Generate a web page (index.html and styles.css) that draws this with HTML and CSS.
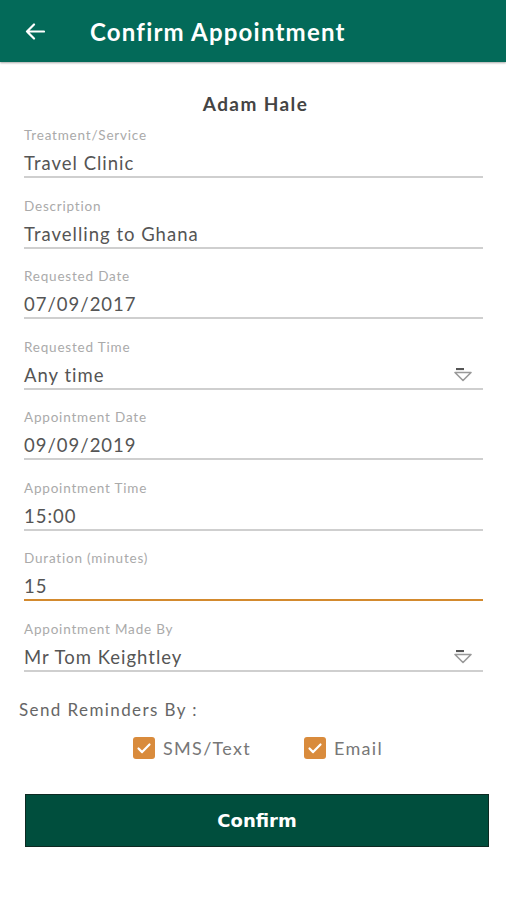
FILE: index.html
```html
<!doctype html>
<html>
<head lang="en">
	<meta charset="UTF-8">
	<meta name="viewport" content="width=device-width, initial-scale=1">
	<title>Confirm Appointment</title>
	<link rel="stylesheet" href="styles.css">
</head>
<body>

<svg style="display:none" xmlns="http://www.w3.org/2000/svg">
	<symbol id="icon-drop" viewBox="0 0 20 14">
		<path d="M3 1h8" stroke="#555" stroke-width="2.2" fill="none"/>
		<path d="M2 4.5h16l-8 8z" stroke="#999" stroke-width="1.6" fill="none" stroke-linejoin="round"/>
	</symbol>
	<symbol id="icon-check" viewBox="0 0 22 22">
		<path d="M5.5 11.5l3.6 3.6 7.4-7.6" stroke="#fff" stroke-width="2.2" fill="none" stroke-linecap="round" stroke-linejoin="round"/>
	</symbol>
</svg>

<header class="ap-header">
	<svg class="ap-header__back" viewBox="0 0 20 17">
		<path d="M19 8.5H2M9 1.5l-7 7 7 7" stroke="#fff" stroke-width="2.2" fill="none" stroke-linecap="round" stroke-linejoin="round"/>
	</svg>
	<h1 class="ap-header__title">Confirm Appointment</h1>
</header>

<div class="ap-content">
	<div class="ap-name">Adam Hale</div>

	<div class="ap-field">
		<div class="ap-field__label">Treatment/Service</div>
		<div class="ap-field__value">Travel Clinic</div>
	</div>
	<div class="ap-field">
		<div class="ap-field__label">Description</div>
		<div class="ap-field__value">Travelling to Ghana</div>
	</div>
	<div class="ap-field">
		<div class="ap-field__label">Requested Date</div>
		<div class="ap-field__value">07/09/2017</div>
	</div>
	<div class="ap-field">
		<div class="ap-field__label">Requested Time</div>
		<div class="ap-field__value">Any time
			<svg class="ap-field__drop"><use xlink:href="#icon-drop"></use></svg>
		</div>
	</div>
	<div class="ap-field">
		<div class="ap-field__label">Appointment Date</div>
		<div class="ap-field__value">09/09/2019</div>
	</div>
	<div class="ap-field">
		<div class="ap-field__label">Appointment Time</div>
		<div class="ap-field__value">15:00</div>
	</div>
	<div class="ap-field is-active">
		<div class="ap-field__label">Duration (minutes)</div>
		<div class="ap-field__value">15</div>
	</div>
	<div class="ap-field">
		<div class="ap-field__label">Appointment Made By</div>
		<div class="ap-field__value">Mr Tom Keightley
			<svg class="ap-field__drop"><use xlink:href="#icon-drop"></use></svg>
		</div>
	</div>

	<div class="ap-reminders">Send Reminders By :</div>
	<div class="ap-checks">
		<label class="ap-check">
			<svg class="ap-check__box"><use xlink:href="#icon-check"></use></svg>
			SMS/Text
		</label>
		<label class="ap-check">
			<svg class="ap-check__box"><use xlink:href="#icon-check"></use></svg>
			Email
		</label>
	</div>

	<button class="ap-button">Confirm</button>
</div>

</body>
</html>
```

FILE: styles.css
```css
* {
	margin: 0;
	padding: 0;
	box-sizing: border-box;
}
body {
	color: #555;
	font-family: Lato, 'Open Sans', sans-serif;
	background: #fff;
}
.ap-header {
	display: flex;
	align-items: center;
	height: 62px;
	background-color: #036a59;
	padding-left: 25px;
	box-shadow: 0 1px 2px rgba(0, 0, 0, 0.35);
}
.ap-header__back {
	width: 20px;
	height: 17px;
}
.ap-header__title {
	margin-left: 45px;
	color: #fff;
	font-size: 24px;
	font-weight: bold;
	letter-spacing: 1.2px;
}
.ap-content {
	padding: 30px 23px 0 24px;
}
.ap-name {
	text-align: center;
	font-size: 19px;
	line-height: 24px;
	font-weight: bold;
	letter-spacing: 1.4px;
	color: #444;
	margin-bottom: 11px;
	padding-left: 4px;
}
.ap-field {
	margin-bottom: 19.5px;
}
.ap-field__label {
	font-size: 13.5px;
	line-height: 16px;
	letter-spacing: 0.8px;
	color: #aaa;
}
.ap-field__value {
	display: flex;
	align-items: center;
	justify-content: space-between;
	margin-top: 7px;
	height: 28px;
	font-size: 18.5px;
	line-height: 26px;
	letter-spacing: 1px;
	color: #555;
	border-bottom: 2px solid #cfcfcf;
}
.is-active .ap-field__value {
	border-bottom-color: #d38a2e;
}
.ap-field__drop {
	width: 20px;
	height: 14px;
	margin-right: 10px;
}
.ap-reminders {
	margin-top: 26.5px;
	margin-left: -5px;
	font-size: 17px;
	line-height: 24px;
	letter-spacing: 1.4px;
	color: #666;
}
.ap-checks {
	display: flex;
	justify-content: center;
	gap: 53px;
	margin-top: 14px;
	padding-left: 9px;
}
.ap-check {
	display: flex;
	align-items: center;
	gap: 8px;
	font-size: 18px;
	line-height: 24px;
	letter-spacing: 1.3px;
	color: #777;
}
.ap-check__box {
	width: 22px;
	height: 22px;
	background-color: #d98b3c;
	border-radius: 3px;
}
.ap-button {
	display: block;
	width: 464px;
	height: 53px;
	margin-top: 34px;
	margin-left: 1px;
	background-color: #004e3d;
	border: 1px solid #0d2a22;
	color: #fff;
	font-family: 'DejaVu Sans', sans-serif;
	font-size: 18px;
	font-weight: bold;
}
```
